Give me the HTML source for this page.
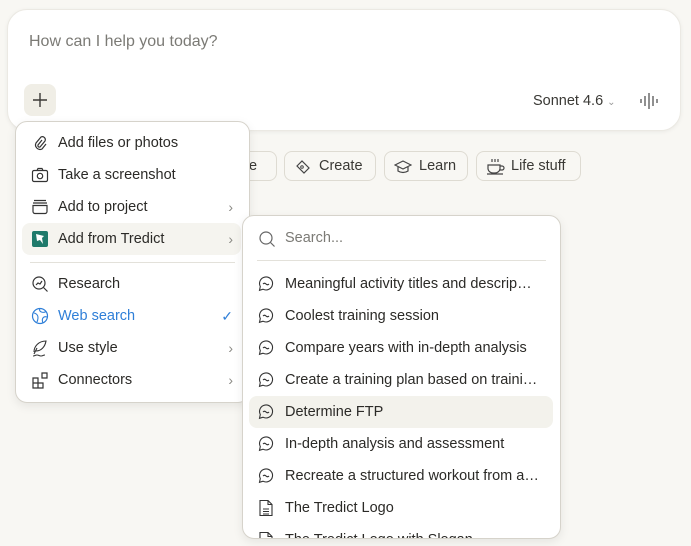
<!DOCTYPE html><html><head><style>
body{margin:0;width:691px;height:546px;background:#f8f7f3;font-family:"Liberation Sans",sans-serif;position:relative;overflow:hidden;color:#2b2a27}
.card{position:absolute;left:7px;top:9px;width:674px;height:122px;background:#fff;border-radius:20px;box-shadow:0 1px 4px rgba(0,0,0,.06);border:1px solid #ebe9e3;box-sizing:border-box}
.ph{position:absolute;left:21px;top:23px;font-size:16px;color:#7b7a75}
.plus{position:absolute;left:16px;top:74px;width:32px;height:32px;background:#f0eee6;border-radius:8px}
.chip{position:absolute;top:151px;height:30px;border:1px solid #dedbd2;border-radius:8px;box-sizing:border-box;font-size:14.5px;line-height:28px;color:#3a3935;background:#f8f7f3}
.menu{position:absolute;background:#fff;border:1px solid #d6d3cb;border-radius:12px;box-shadow:0 3px 10px rgba(0,0,0,.08);box-sizing:border-box;overflow:hidden}
.it{position:absolute;left:0;right:0;height:32px;font-size:14.5px;line-height:32px}
.it .t{position:absolute;left:42px}
.it svg{position:absolute;left:15px;top:7px}
.arr{position:absolute;right:16px;top:0;color:#8a8984;font-size:14px}
.m2 .it .t{left:42px;white-space:nowrap}
.m2 .it svg{left:15px;top:7px}
</style></head><body>
<div class="card">
<div class="ph">How can I help you today?</div>
<div class="plus"><svg width="32" height="32"><path d="M16 9v14M9 16h14" stroke="#3a3935" stroke-width="1.4"/></svg></div>
<div style="position:absolute;left:525px;top:83px;font-size:14.5px;color:#3a3935">Sonnet 4.6 <span style="font-size:10px;color:#999">&#8964;</span></div>
<svg style="position:absolute;left:631px;top:81px" width="22" height="20"><path d="M2 8v4M6 5v10M10 2v16M14 5v10M18 8v4" stroke="#555" stroke-width="1.3"/></svg>
</div>
<div class="chip" style="left:220px;width:57px;padding-left:24px">te</div>
<div class="chip" style="left:284px;width:92px;padding-left:34px">Create<svg style="position:absolute;left:9px;top:6px" width="18" height="18"><path d="M3 8l5-5 7 7-5 5z" fill="none" stroke="#444" stroke-width="1.2"/><circle cx="8" cy="9" r="1.3" fill="none" stroke="#444"/></svg></div>
<div class="chip" style="left:384px;width:84px;padding-left:34px">Learn<svg style="position:absolute;left:9px;top:6px" width="18" height="18"><path d="M1 7l8-4 8 4-8 4zM4 9v4c3 2 7 2 10 0V9" fill="none" stroke="#444" stroke-width="1.2"/></svg></div>
<div class="chip" style="left:476px;width:105px;padding-left:34px">Life stuff<svg style="position:absolute;left:9px;top:5px" width="20" height="18"><path d="M2 8h12v4a5 5 0 01-5 4h-2a5 5 0 01-5-4zM14 9h2a2 2 0 010 4h-2M6 2v3M9 2v3M12 2v3M1 17h16" fill="none" stroke="#444" stroke-width="1.2"/></svg></div>

<div class="menu" style="left:15px;top:121px;width:235px;height:282px">
<div class="it" style="top:5px"><svg width="18" height="18"><path d="M11 6l-4 5a1.5 1.5 0 002 2l5-6a3 3 0 00-4-4l-5 6a4.5 4.5 0 006 6l4-5" fill="none" stroke="#333" stroke-width="1.2"/></svg><span class="t">Add files or photos</span></div>
<div class="it" style="top:37px"><svg width="18" height="18"><rect x="1.5" y="4.5" width="15" height="11" rx="1.5" fill="none" stroke="#333" stroke-width="1.2"/><path d="M6 4.5l1-2h4l1 2" fill="none" stroke="#333" stroke-width="1.2"/><circle cx="9" cy="10" r="2.7" fill="none" stroke="#333" stroke-width="1.2"/></svg><span class="t">Take a screenshot</span></div>
<div class="it" style="top:69px"><svg width="18" height="18"><path d="M3 2.5h12M2 5h14M2 7.5h14v6a2 2 0 01-2 2H4a2 2 0 01-2-2z" fill="none" stroke="#333" stroke-width="1.2"/></svg><span class="t">Add to project</span><span class="arr">&#8250;</span></div>
<div class="it" style="top:101px;left:6px;right:8px;background:#f5f4ef;border-radius:8px"><svg style="left:9px" width="18" height="18"><rect x="1" y="1" width="16" height="16" rx="2" fill="#1f7a6b"/><path d="M5 4l8 2-2 2 1 6-3-4-3 1z" fill="#fff"/></svg><span class="t" style="left:36px">Add from Tredict</span><span class="arr" style="right:8px">&#8250;</span></div>
<div style="position:absolute;left:14px;right:14px;top:140px;height:1px;background:#e3e1da"></div>
<div class="it" style="top:146px"><svg width="18" height="18"><circle cx="8" cy="8" r="6" fill="none" stroke="#333" stroke-width="1.2"/><path d="M12.5 12.5l4 4M5 10l2-2 2 1 2-3" fill="none" stroke="#333" stroke-width="1.2"/></svg><span class="t">Research</span></div>
<div class="it" style="top:178px;color:#2f7fd8"><svg width="18" height="18"><circle cx="9" cy="9" r="7.5" fill="none" stroke="#2f7fd8" stroke-width="1.2"/><path d="M3 6c4 1 5 4 3 9M9 1.5c-2 3 3 5 6 3M16 10c-3-1-6 1-4 6" fill="none" stroke="#2f7fd8" stroke-width="1.1"/></svg><span class="t">Web search</span><span class="arr" style="color:#2f7fd8">&#10003;</span></div>
<div class="it" style="top:210px"><svg width="18" height="18"><path d="M3 13c0-6 5-11 12-11-1 6-5 10-10 10M6 9l-3 6M2 17c2 0 2-1 4-1s2 1 4 1 2-1 4-1" fill="none" stroke="#333" stroke-width="1.1"/></svg><span class="t">Use style</span><span class="arr">&#8250;</span></div>
<div class="it" style="top:242px"><svg width="18" height="18"><path d="M2 7h5v5H2zM7 12h5v5H7zM2 12h5v5H2zM11 2h5v5h-5z" fill="none" stroke="#333" stroke-width="1.2"/></svg><span class="t">Connectors</span><span class="arr">&#8250;</span></div>
</div>

<div class="menu m2" style="left:242px;top:215px;width:319px;height:324px">
<svg style="position:absolute;left:15px;top:14px" width="18" height="18"><circle cx="8" cy="8" r="6" fill="none" stroke="#666" stroke-width="1.2"/><path d="M12.5 12.5l4 4" stroke="#666" stroke-width="1.2"/></svg>
<div style="position:absolute;left:42px;top:14px;font-size:14.5px;color:#7b7a75">Search...</div>
<div style="position:absolute;left:14px;right:14px;top:44px;height:1px;background:#e3e1da"></div>
<div class="it" style="top:52px"><span class="t">Meaningful activity titles and descrip…</span></div>
<div class="it" style="top:84px"><span class="t">Coolest training session</span></div>
<div class="it" style="top:116px"><span class="t">Compare years with in-depth analysis</span></div>
<div class="it" style="top:148px"><span class="t">Create a training plan based on traini…</span></div>
<div class="it" style="top:180px;left:6px;right:7px;background:#f3f2ec;border-radius:8px;"><span class="t" style="left:36px">Determine FTP</span></div>
<div class="it" style="top:212px"><span class="t">In-depth analysis and assessment</span></div>
<div class="it" style="top:244px"><span class="t">Recreate a structured workout from a…</span></div>
<div class="it" style="top:276px"><svg width="16" height="18"><path d="M2 1.5h8l4 4v11H2zM10 1.5v4h4M5 10h6M5 12.5h6M5 15h6" fill="none" stroke="#333" stroke-width="1.1"/></svg><span class="t">The Tredict Logo</span></div>
<div class="it" style="top:308px"><svg width="16" height="18"><path d="M2 1.5h8l4 4v11H2zM10 1.5v4h4" fill="none" stroke="#333" stroke-width="1.1"/></svg><span class="t">The Tredict Logo with Slogan</span></div>
<svg style="position:absolute;left:0;top:0" width="319" height="324">
<g fill="none" stroke="#333" stroke-width="1.1">
<g id="b"><path d="M17.3 70.5A6.5 6.5 0 1 1 20 73.2L16.5 74.3Z"/><path d="M20 68q1.5-1.5 3 0t3 0"/></g>
<use href="#b" y="32"/><use href="#b" y="64"/><use href="#b" y="96"/><use href="#b" y="128"/><use href="#b" y="160"/><use href="#b" y="192"/>
</g></svg>
</div>
</body></html>
